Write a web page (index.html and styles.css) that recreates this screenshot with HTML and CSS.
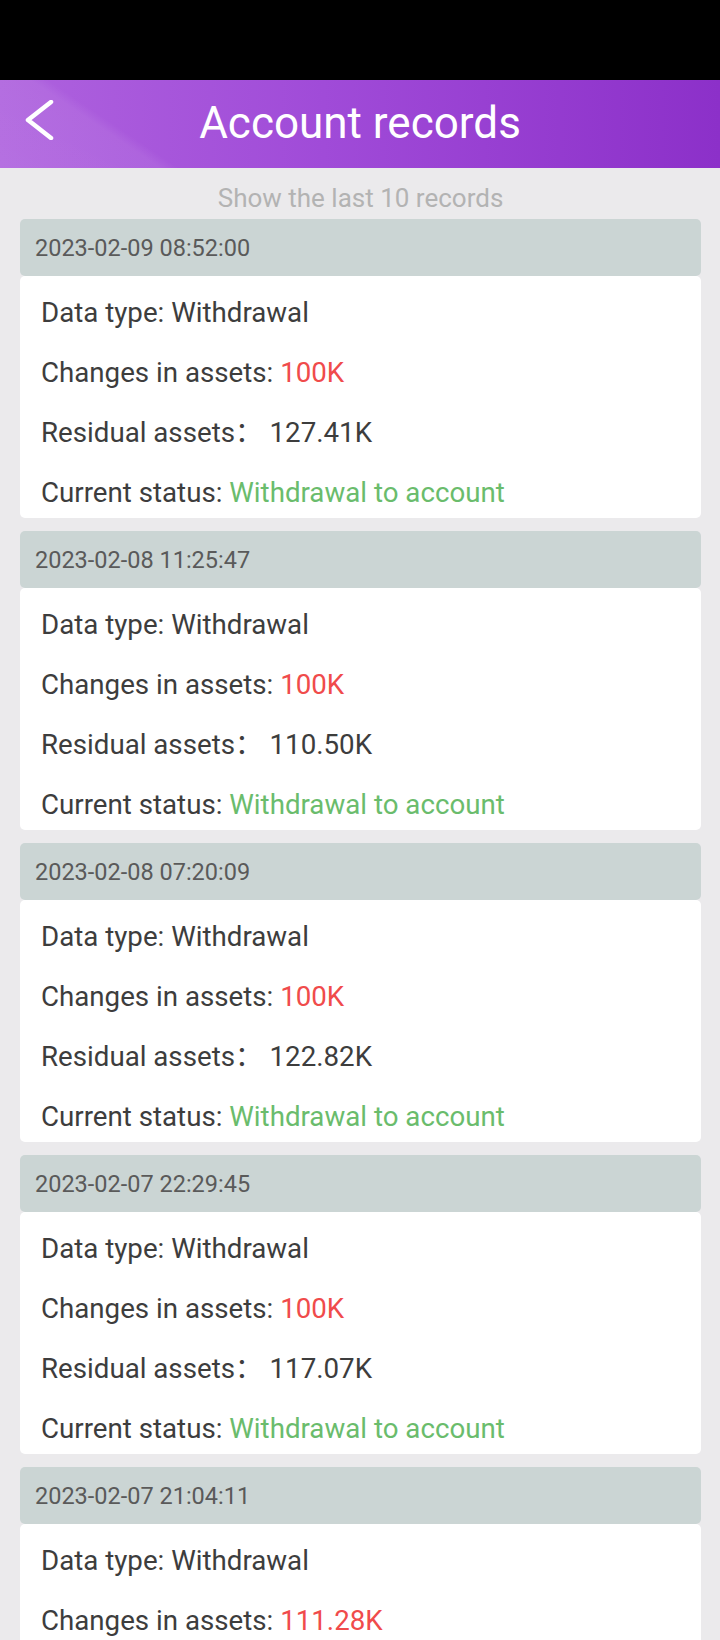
FILE: index.html
```html
<!DOCTYPE html>
<html lang="en">
<head>
<meta charset="utf-8">
<title>Account records</title>
<link rel="stylesheet" href="styles.css">
</head>
<body>
<div class="statusbar"></div>
<header class="topbar">
  <div class="back">
    <svg class="back-icon" viewBox="0 0 30 40" width="30" height="40" aria-hidden="true">
      <polyline points="27,2 4,20 27,38" fill="none" stroke="#fff" stroke-width="4.5" stroke-linecap="round" stroke-linejoin="round"/>
    </svg>
  </div>
  <h1 class="title">Account records</h1>
  <div class="spacer"></div>
</header>
<main class="content">
  <p class="subtitle">Show the last 10 records</p>

  <section class="record">
    <div class="record-date">2023-02-09 08:52:00</div>
    <div class="record-body">
      <div class="row">Data type: Withdrawal</div>
      <div class="row">Changes in assets: <span class="neg">100K</span></div>
      <div class="row">Residual assets<span class="fw">：</span> 127.41K</div>
      <div class="row">Current status: <span class="ok">Withdrawal to account</span></div>
    </div>
  </section>

  <section class="record">
    <div class="record-date">2023-02-08 11:25:47</div>
    <div class="record-body">
      <div class="row">Data type: Withdrawal</div>
      <div class="row">Changes in assets: <span class="neg">100K</span></div>
      <div class="row">Residual assets<span class="fw">：</span> 110.50K</div>
      <div class="row">Current status: <span class="ok">Withdrawal to account</span></div>
    </div>
  </section>

  <section class="record">
    <div class="record-date">2023-02-08 07:20:09</div>
    <div class="record-body">
      <div class="row">Data type: Withdrawal</div>
      <div class="row">Changes in assets: <span class="neg">100K</span></div>
      <div class="row">Residual assets<span class="fw">：</span> 122.82K</div>
      <div class="row">Current status: <span class="ok">Withdrawal to account</span></div>
    </div>
  </section>

  <section class="record">
    <div class="record-date">2023-02-07 22:29:45</div>
    <div class="record-body">
      <div class="row">Data type: Withdrawal</div>
      <div class="row">Changes in assets: <span class="neg">100K</span></div>
      <div class="row">Residual assets<span class="fw">：</span> 117.07K</div>
      <div class="row">Current status: <span class="ok">Withdrawal to account</span></div>
    </div>
  </section>

  <section class="record">
    <div class="record-date">2023-02-07 21:04:11</div>
    <div class="record-body">
      <div class="row">Data type: Withdrawal</div>
      <div class="row">Changes in assets: <span class="neg">111.28K</span></div>
      <div class="row">Current status: <span class="ok">Withdrawal to account</span></div>
    </div>
  </section>
</main>
</body>
</html>
```

FILE: styles.css
```css
html, body {
  margin: 0;
  padding: 0;
}
body {
  background: #ebeaec;
  font-family: Roboto, "Noto Sans", "Noto Sans CJK SC", sans-serif;
  color: #3d3d3d;
}
.statusbar {
  height: 80px;
  background: #000;
}
.topbar {
  height: 88px;
  display: grid;
  grid-template-columns: 1fr auto 1fr;
  align-items: center;
  background:
    linear-gradient(34deg, rgba(255,255,255,0.09) 0, rgba(255,255,255,0.07) 90px, rgba(255,255,255,0) 100px),
    linear-gradient(90deg, #ae62de 0%, #a04bd8 45%, #8c30c9 100%);
}
.back {
  align-self: start;
  padding: 20px 0 0 24px;
  height: 40px;
}
.back-icon {
  display: block;
}
.title {
  margin: 0;
  padding-bottom: 2px;
  font-size: 44px;
  font-weight: 400;
  color: #fff;
  line-height: 52px;
  white-space: nowrap;
}
.content {
  padding: 0 19px 0 20px;
}
.subtitle {
  margin: 0;
  padding: 15px 0 6px;
  text-align: center;
  font-size: 26px;
  line-height: 30px;
  color: #b3b3b3;
}
.record {
  margin-bottom: 13px;
}
.record-date {
  height: 57px;
  display: flex;
  align-items: center;
  padding-left: 15px;
  background: #cbd5d4;
  border-radius: 5px;
  font-size: 23.5px;
  color: #5a5a5a;
}
.record-body {
  background: #fff;
  border-radius: 5px;
  padding: 21px 20px 9px 21px;
  display: flex;
  flex-direction: column;
  gap: 28px;
}
.row {
  height: 32px;
  font-size: 27.7px;
  line-height: 32px;
  white-space: nowrap;
}
.neg {
  color: #f04b4b;
}
.ok {
  color: #6abc6c;
}
.fw {
  font-family: "Noto Sans CJK SC", sans-serif;
  line-height: 1;
}
```
